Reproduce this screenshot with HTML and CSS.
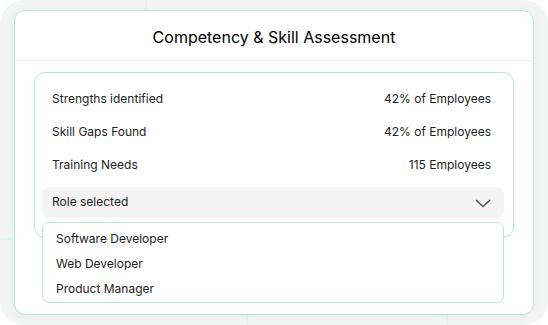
FILE: index.html
```
<!DOCTYPE html>
<html>
<head>
<meta charset="utf-8">
<link rel="stylesheet" href="styles.css">
</head>
<body>
<div class="frame">
  <span class="gl gl-v gl-top1"></span>
  <span class="gl gl-v gl-bot1"></span>
  <span class="gl gl-v gl-bot2"></span>
  <span class="gl gl-h gl-left1"></span>
  <div class="card">
    <div class="card-head">Competency &amp; Skill Assessment</div>
    <div class="panel">
      <div class="row"><span>Strengths identified</span><span>42% of Employees</span></div>
      <div class="row"><span>Skill Gaps Found</span><span>42% of Employees</span></div>
      <div class="row"><span>Training Needs</span><span>115 Employees</span></div>
      <div class="select-wrap">
        <div class="select">
          <span>Role selected</span>
          <svg class="chev" width="16" height="9" viewBox="0 0 16 9"><path d="M1.5 1.5 L8 7.5 L14.5 1.5" fill="none" stroke="#555" stroke-width="1.7" stroke-linecap="round" stroke-linejoin="round"/></svg>
        </div>
        <ul class="menu">
          <li>Software Developer</li>
          <li>Web Developer</li>
          <li>Product Manager</li>
        </ul>
      </div>
    </div>
  </div>
</div>
</body>
</html>
```
FILE: styles.css
```
* { box-sizing: border-box; }
html, body { margin: 0; padding: 0; background: #fff; }
body { font-family: Inter, "Noto Sans", sans-serif; color: #1f1f1f; width: 548px; height: 325px; overflow: hidden; }
.frame {
  position: relative;
  width: 548px;
  height: 325px;
  background: #f3f4f4;
  border-radius: 24px;
  padding: 10px 14px 10px 14px;
}
.gl { position: absolute; background: #e2f1eb; }
.gl-v { width: 2px; }
.gl-h { height: 2px; }
.gl-top1 { left: 145px; top: 0; height: 10px; }
.gl-bot1 { left: 246px; bottom: 0; height: 10px; }
.gl-bot2 { left: 446px; bottom: 0; height: 10px; }
.gl-left1 { left: 0; top: 238px; width: 14px; }
.card {
  position: relative;
  width: 520px;
  height: 305px;
  background: #fff;
  border: 1px solid #b7e9d7;
  border-radius: 11px;
  box-shadow: 0 2px 10px rgba(0,0,0,0.04);
}
.card-head {
  height: 50px;
  display: flex;
  align-items: center;
  justify-content: center;
  font-size: 16px;
  font-weight: 400;
  color: #000;
  border-bottom: 1px solid #f1f1f1;
  padding-top: 2px;
}
.panel {
  margin: 11px 19px 0 19px;
  border: 1px solid #b7e9d7;
  border-radius: 11px;
  padding: 9px 9px 19px 7px;
  box-shadow: 0 2px 8px rgba(0,0,0,0.03);
}
.row {
  height: 33px;
  display: flex;
  align-items: center;
  justify-content: space-between;
  padding: 0 13px 0 10px;
  font-size: 12px;
  color: #222;
}
.select-wrap { position: relative; margin-top: 6px; }
.select {
  height: 31px;
  background: #f4f4f4;
  border-radius: 8px;
  display: flex;
  align-items: center;
  justify-content: space-between;
  padding: 0 13px 2px 10px;
  font-size: 12px;
  color: #222;
}
.chev { display: block; margin-top: 3px; }
.menu {
  position: absolute;
  left: 0;
  right: 0;
  top: calc(100% + 4px);
  height: 81px;
  margin: 0;
  padding: 3px 0 0 0;
  list-style: none;
  background: #fff;
  border: 1px solid #b7e9d7;
  border-radius: 7px;
}
.menu li {
  height: 25px;
  display: flex;
  align-items: center;
  padding-left: 13px;
  font-size: 12px;
  color: #222;
}
```
